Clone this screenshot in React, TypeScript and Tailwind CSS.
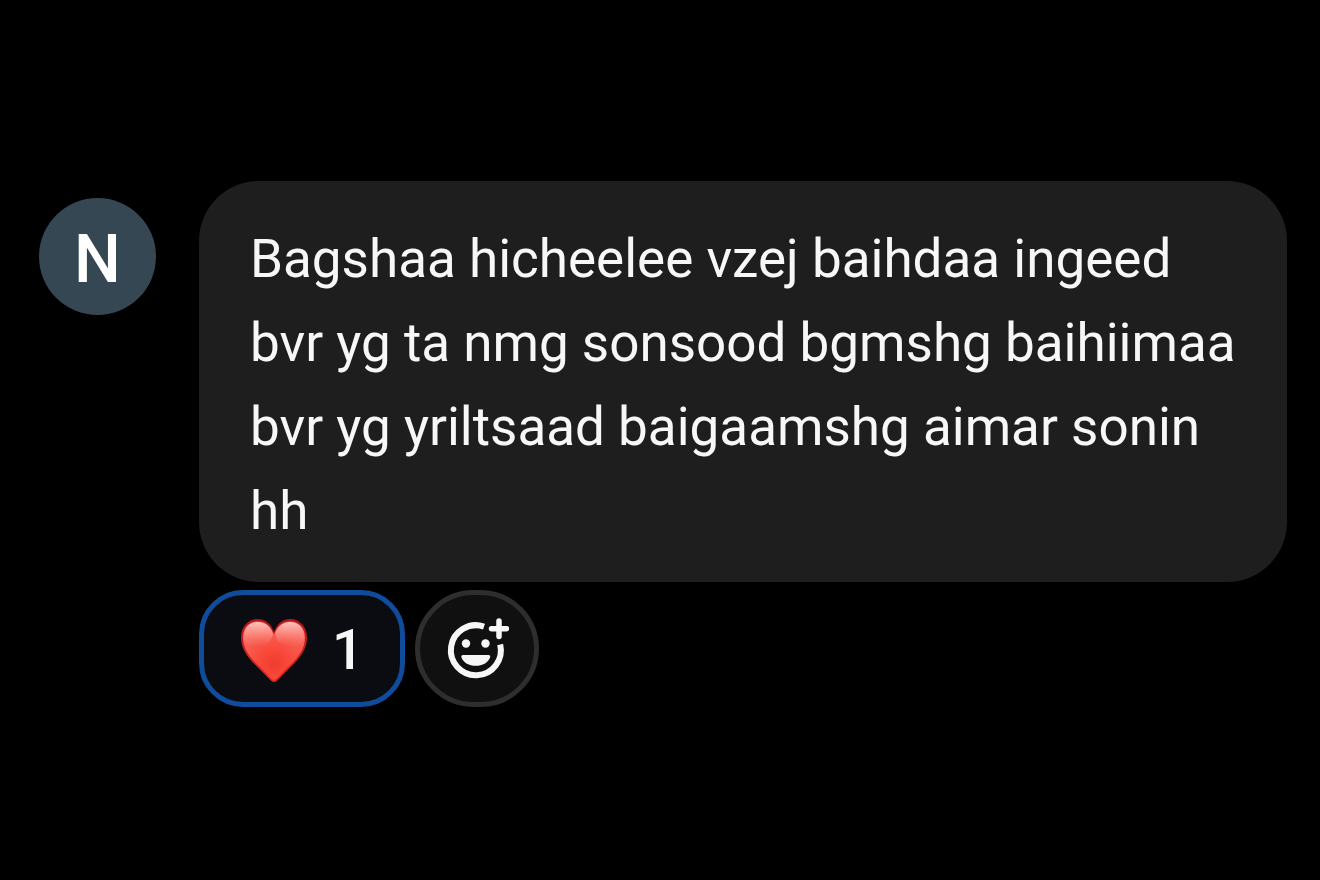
import React, { useState } from "react";

const HeartIcon = () => (
  <svg width="68" height="66" viewBox="0 0 68 66" aria-hidden="true">
    <defs>
      <radialGradient id="heartFill" cx="0.5" cy="0.72" r="0.65">
        <stop offset="0" stopColor="#ee3c2e" />
        <stop offset="0.35" stopColor="#f9483a" />
        <stop offset="1" stopColor="#f7665b" />
      </radialGradient>
      <linearGradient id="heartRim" x1="0" y1="0" x2="0" y2="1">
        <stop offset="0" stopColor="#b5141a" />
        <stop offset="0.5" stopColor="#c81f1f" />
        <stop offset="1" stopColor="#e8291e" />
      </linearGradient>
      <linearGradient id="heartShine" x1="0" y1="0" x2="0" y2="1">
        <stop offset="0" stopColor="#ffd6d0" stopOpacity="0.85" />
        <stop offset="0.5" stopColor="#ffb0a8" stopOpacity="0.45" />
        <stop offset="1" stopColor="#ff8a7e" stopOpacity="0" />
      </linearGradient>
    </defs>
    <path
      d="M34 65C31 65 27 59 17 49.500C7 40 1 31.500 1 20.500C1 9.500 8.500 2 18 2C25.500 2 31 7 34 15C37 7 42.500 2 50 2C59.500 2 67 9.500 67 20.500C67 31.500 61 40 51 49.500C41 59 37 65 34 65Z"
      fill="url(#heartRim)"
    />
    <path
      d="M34 63C31.500 63 28 57.500 18.500 48.500C9 39.500 3 31.500 3 20.500C3 10.500 9.500 4.500 18 4.500C26 4.500 31 10 34 17.500C37 10 42 4.500 50 4.500C58.500 4.500 65 10.500 65 20.500C65 31.500 59 39.500 49.500 48.500C40 57.500 36.500 63 34 63Z"
      fill="url(#heartFill)"
    />
    <path
      d="M4 22C3 11 9.500 5 18 5C26 5 31 10 33 17.500C31 26 24 30 16 30C10 30 6 27 4 22ZM64 22C65 11 58.500 5 50 5C42 5 37 10 35 17.500C37 26 44 30 52 30C58 30 62 27 64 22Z"
      fill="url(#heartShine)"
    />
  </svg>
);

const AddReactionIcon = () => (
  <svg width="64" height="64" viewBox="0 0 64 64" aria-hidden="true">
    <path
      d="M39 9.600A25 25 0 1 0 55.200 27.500"
      fill="none"
      stroke="#f7f7f7"
      strokeWidth="6"
    />
    <path
      d="M54 4V19.500M46.500 11.700H61.500"
      stroke="#f7f7f7"
      strokeWidth="5.500"
      strokeLinecap="round"
    />
    <circle cx="21" cy="26.500" r="4.200" fill="#f7f7f7" />
    <circle cx="40.500" cy="26.500" r="4.200" fill="#f7f7f7" />
    <path
      d="M18 38H43.500C45 38 45.500 39 45 40.500C43 46 37.500 48.800 30.700 48.800C24 48.800 18.500 46 16.500 40.500C16 39 16.500 38 18 38Z"
      fill="#f7f7f7"
    />
  </svg>
);

const App = () => {
  const [liked, setLiked] = useState(true);

  return (
    <main className="flex items-start min-h-screen bg-black pt-[181px] pl-[39px] pr-[33px] gap-[43px] font-['Roboto',sans-serif]">
      <div className="flex items-center justify-center shrink-0 size-[117px] mt-[17px] pt-1.5 rounded-full bg-[#364754] text-[66px] font-medium text-white">
        N
      </div>

      <div className="flex-1 min-w-0">
        <p className="pl-[51px] pr-10 pt-9 pb-[29px] rounded-[60px] bg-[#1e1e1e] text-[53px] leading-[84px] text-[#f7f7f7]">
          Bagshaa hicheelee vzej baihdaa ingeed bvr yg ta nmg sonsood bgmshg
          baihiimaa bvr yg yriltsaad baigaamshg aimar sonin hh
        </p>

        <div className="flex gap-[10px] mt-2">
          <button
            type="button"
            aria-pressed={liked}
            onClick={() => setLiked(!liked)}
            className={`flex items-center gap-6 h-[117px] pt-0.5 px-9 rounded-[44px] border-5 text-[56px] leading-[64px] font-medium text-[#f7f7f7] ${
              liked
                ? "border-[#104c9c] bg-[#0b0c11]"
                : "border-[#2e2e31] bg-[#101010]"
            }`}
          >
            <HeartIcon />
            {liked ? 1 : 0}
          </button>
          <button
            type="button"
            aria-label="Add reaction"
            className="flex items-center justify-center w-[124px] h-[117px] rounded-full border-5 border-[#2e2e31] bg-[#101010]"
          >
            <AddReactionIcon />
          </button>
        </div>
      </div>
    </main>
  );
};

export default App;
